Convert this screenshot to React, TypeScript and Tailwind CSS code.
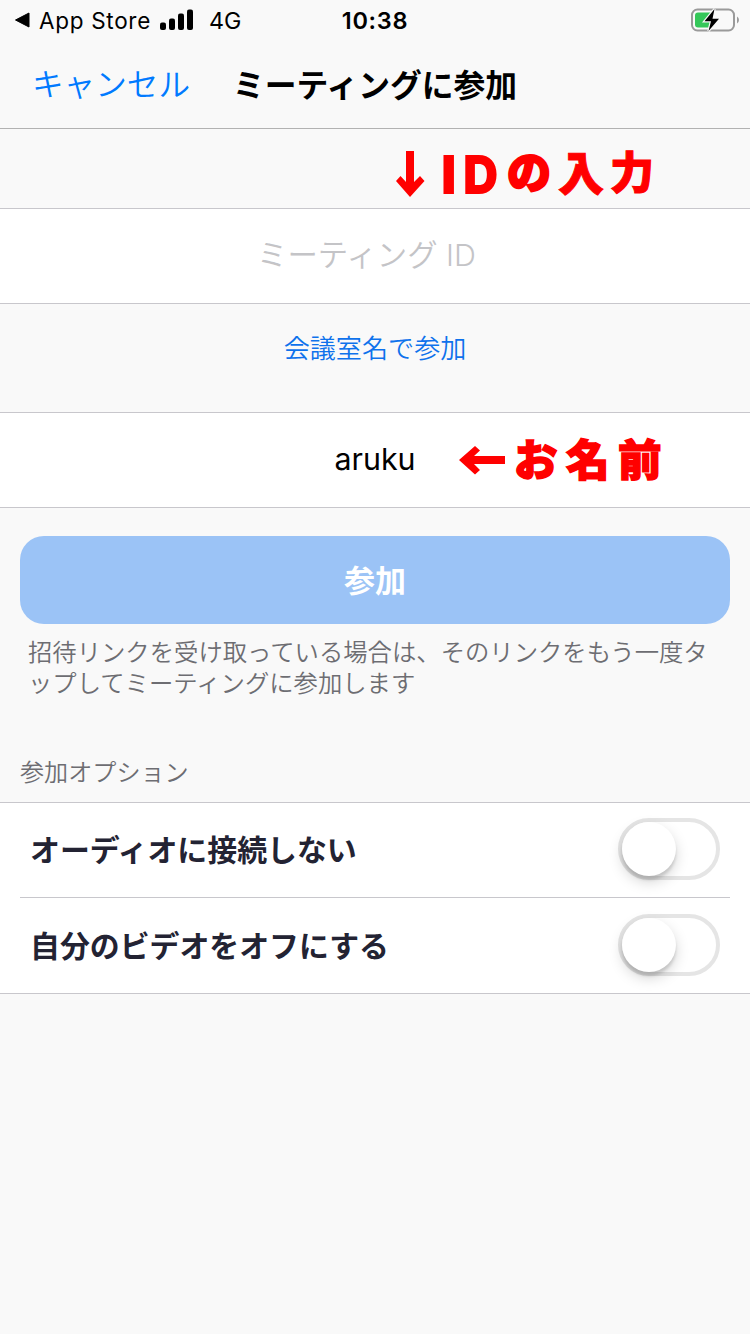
import React from 'react'

interface ToggleRowProps {
  label: string
  last?: boolean
}

const StatusBar: React.FC = () => {
  return (
    <div className="grid h-10 grid-cols-3 items-center font-['Inter',sans-serif] text-black">
      <div className="flex items-center pl-[14px]">
        <svg width="16" height="16" viewBox="0 0 16 16">
          <path d="M1.5 8 L15 1 V15 Z" stroke="#000" strokeLinejoin="round" />
        </svg>
        <span className="mt-[2px] ml-[9px] w-[112px] whitespace-nowrap text-[22.5px] tracking-[0.7px]">
          App Store
        </span>
        <svg className="ml-[9px]" width="34" height="22" viewBox="0 0 34 22">
          <rect x="0" y="13.5" width="6" height="7.5" rx="2" />
          <rect x="9" y="9.5" width="6" height="11.5" rx="2" />
          <rect x="18" y="4.5" width="6" height="16.5" rx="2" />
          <rect x="27" y="0.5" width="6" height="20.5" rx="2" />
        </svg>
        <span className="mt-[2px] ml-[15px] text-[23.3px]">4G</span>
      </div>
      <div className="pt-[2px] text-center text-[23.5px] font-semibold tracking-[0.7px]">
        10:38
      </div>
      <div className="flex justify-end pr-[10px]">
        <svg width="50" height="26" viewBox="0 0 50 26">
          <rect x="2" y="2.5" width="42" height="21" rx="5.5" fill="none" stroke="#9a9a9a" strokeWidth="2" />
          <path d="M47 9.5 Q49 10.5 49 13 Q49 15.5 47 16.5 Z" fill="#9a9a9a" />
          <rect x="5" y="5.5" width="19" height="15" rx="3" fill="#34c759" />
          <path
            d="M24.5 2 L14.5 14.2 H21 L18.5 24 L29 11.7 H22.5 Z"
            stroke="#f9f9f9"
            strokeWidth="2.4"
            paintOrder="stroke"
          />
        </svg>
      </div>
    </div>
  )
}

const ToggleRow: React.FC<ToggleRowProps> = ({ label, last }) => {
  return (
    <div
      className={
        last
          ? 'flex h-[95px] items-center justify-between px-[10px] pb-[2px]'
          : 'flex h-[95px] items-center justify-between border-b border-[#c8c7cc] px-[10px] pb-[2px]'
      }
    >
      <span className="pt-[3px] text-[29.9px] font-bold text-[#232333]">{label}</span>
      <button
        role="switch"
        aria-checked="false"
        aria-label={label}
        className="h-[62px] w-[102px] rounded-full border-4 border-[#e5e5e5] bg-white"
      >
        <span className="block size-[54px] rounded-full bg-white shadow-[0_6px_14px_rgba(0,0,0,0.17),0_4px_3px_rgba(0,0,0,0.12)]" />
      </button>
    </div>
  )
}

const App: React.FC = () => {
  return (
    <div className="h-[1334px] w-[750px] overflow-hidden bg-[#f9f9f9] font-['Inter','Noto_Sans_CJK_JP',sans-serif]">
      <header className="h-[129px] border-b border-[#b2b2b2]">
        <StatusBar />
        <div className="grid h-[86px] grid-cols-[1fr_auto_1fr] items-center font-['Noto_Sans_CJK_JP',sans-serif] whitespace-nowrap">
          <button className="pl-[32px] text-left text-[31.6px] font-[350] text-[#007aff]">
            キャンセル
          </button>
          <h1 className="pt-[2px] text-[31.8px] font-bold text-black">
            ミーティングに参加
          </h1>
          <span />
        </div>
      </header>

      <div className="relative h-[79px]">
        <div className="absolute top-0 left-[395px] flex h-full items-center font-['Noto_Sans_CJK_JP',sans-serif] text-[#ff0000]">
          <svg className="mt-[11px]" width="30" height="46" viewBox="0 0 30 46" fill="currentColor">
            <path d="M11 0 H19 V31 L25 25 L29.5 30 L15 46 L1 30 L5.500 25 L11 31 Z" />
          </svg>
          <div className="ml-[16px] flex items-center leading-none font-black whitespace-nowrap">
            <span className="mt-[14px] w-[22px] font-['Inter',sans-serif] text-[53px]">I</span>
            <span className="mt-[14px] w-[44px] origin-left scale-x-[0.92] font-['Inter',sans-serif] text-[53px]">D</span>
            <span className="mt-[2px] w-[51px] text-[44px] [-webkit-text-stroke:2px_#ff0000]">の</span>
            <span className="mt-[3px] w-[52px] text-[46px] [-webkit-text-stroke:1px_#ff0000]">入</span>
            <span className="mt-[3px] text-[44px] [-webkit-text-stroke:1px_#ff0000]">力</span>
          </div>
        </div>
      </div>

      <div className="flex h-[96px] items-center justify-center border-y border-[#c8c7cc] bg-white pr-[17px] pb-px text-[30.4px] font-[350] whitespace-pre text-[#c4c4c7]">
        ミーティング ID
      </div>

      <div className="flex h-[108px] justify-center pt-[26px]">
        <a className="text-[26.1px] leading-[38px] font-[350] text-[#0e72ec]">
          会議室名で参加
        </a>
      </div>

      <div className="relative flex h-[96px] items-center justify-center border-y border-[#c8c7cc] bg-white pb-px text-[30.4px] text-black">
        aruku
        <div className="absolute top-0 left-[459px] flex h-full items-center text-[#ff0000]">
          <svg width="46" height="30" viewBox="0 0 46 30" fill="currentColor">
            <path d="M46 11 V19 H15 L21 25 L16 29.500 L0 15 L16 1 L21 5.500 L15 11 Z" />
          </svg>
          <span className="mb-[5px] ml-[9px] font-['Noto_Sans_CJK_JP',sans-serif] text-[43.5px] font-black tracking-[8.5px] whitespace-nowrap [-webkit-text-stroke:1.5px_#ff0000]">
            お名前
          </span>
        </div>
      </div>

      <div className="px-5 pt-7">
        <button className="h-[88px] w-full rounded-[24px] bg-[#9bc3f6] pt-[2px] text-[31px] font-bold text-white">
          参加
        </button>
        <p className="mt-[13px] px-2 text-[24.35px] leading-[31px] font-[350] whitespace-nowrap text-[#6d6d72]">
          招待リンクを受け取っている場合は、そのリンクをもう一度タ
          <br />
          ップしてミーティングに参加します
        </p>
      </div>

      <h2 className="mt-[54px] h-[49px] pt-[2px] pl-5 text-[24.1px] leading-[36px] font-[350] text-[#6d6d72]">
        参加オプション
      </h2>
      <div className="border-y border-[#c8c7cc] bg-white px-5">
        <ToggleRow label="オーディオに接続しない" />
        <ToggleRow label="自分のビデオをオフにする" last />
      </div>
    </div>
  )
}

export default App
